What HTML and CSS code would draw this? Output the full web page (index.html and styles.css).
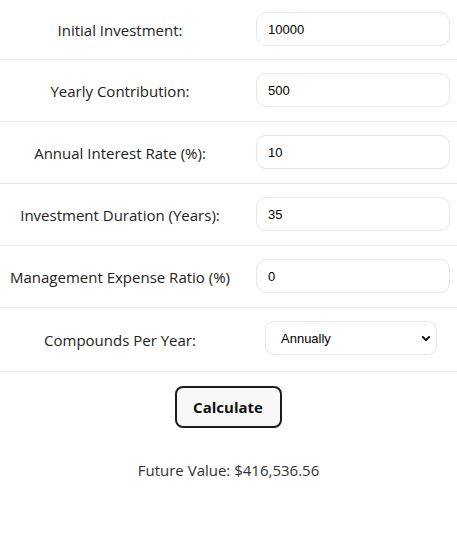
FILE: index.html
```html
<!DOCTYPE html>
<html>
<head>
<meta charset="utf-8">
<link rel="stylesheet" href="styles.css">
</head>
<body>
<div class="calc">
  <div class="row row-first">
    <label class="lbl">Initial Investment:</label>
    <input class="field" type="text" value="10000">
  </div>
  <div class="row">
    <label class="lbl">Yearly Contribution:</label>
    <input class="field" type="text" value="500">
  </div>
  <div class="row">
    <label class="lbl">Annual Interest Rate (%):</label>
    <input class="field" type="text" value="10">
  </div>
  <div class="row">
    <label class="lbl">Investment Duration (Years):</label>
    <input class="field" type="text" value="35">
  </div>
  <div class="row">
    <label class="lbl">Management Expense Ratio (%)</label>
    <input class="field" type="text" value="0">
  </div>
  <div class="row row-select">
    <label class="lbl">Compounds Per Year:</label>
    <div class="select">
      <span>Annually</span>
      <svg class="chev" width="10" height="7" viewBox="0 0 10 7"><path d="M1.2 1.4 L5 5.2 L8.8 1.4" fill="none" stroke="#111" stroke-width="2"/></svg>
    </div>
  </div>
  <div class="actions">
    <button class="btn">Calculate</button>
  </div>
  <p class="result">Future Value: $416,536.56</p>
</div>
</body>
</html>
```
FILE: styles.css
```css
body {
  margin: 0;
  font-family: "Open Sans", "Noto Sans", sans-serif;
  color: #222;
  background: #fff;
}
.row {
  display: flex;
  align-items: center;
  height: 61px;
  border-bottom: 1px solid #e6e6e6;
  box-sizing: content-box;
}
.row-first {
  height: 59px;
}
.row-select {
  height: 63px;
}
.lbl {
  width: 240px;
  text-align: center;
  font-size: 15px;
  color: #222;
}
.field {
  margin-left: 16px;
  width: 194px;
  height: 34px;
  box-sizing: border-box;
  border: 1px solid #e6e6e6;
  border-radius: 10px;
  padding: 0 11px;
  font-family: "Liberation Sans", Arial, sans-serif;
  font-size: 13px;
  color: #000;
  margin-top: -1px;
}
.select {
  margin-left: 25px;
  width: 172px;
  height: 34px;
  box-sizing: border-box;
  border: 1px solid #e6e6e6;
  border-radius: 9px;
  display: flex;
  align-items: center;
  justify-content: space-between;
  padding: 0 5px 0 15px;
  font-family: "Liberation Sans", Arial, sans-serif;
  font-size: 13px;
  color: #000;
  margin-top: -3px;
}
.actions {
  display: flex;
  justify-content: center;
  padding-top: 14px;
}
.btn {
  width: 107px;
  height: 42px;
  border: 2px solid #1c1c1c;
  border-radius: 8px;
  background: #f8f8f8;
  font-family: "Open Sans", "Noto Sans", sans-serif;
  font-weight: 700;
  font-size: 15px;
  color: #111;
  margin-left: -1px;
}
.result {
  margin: 32px 0 0;
  text-align: center;
  font-size: 15px;
  color: #333;
}
```
